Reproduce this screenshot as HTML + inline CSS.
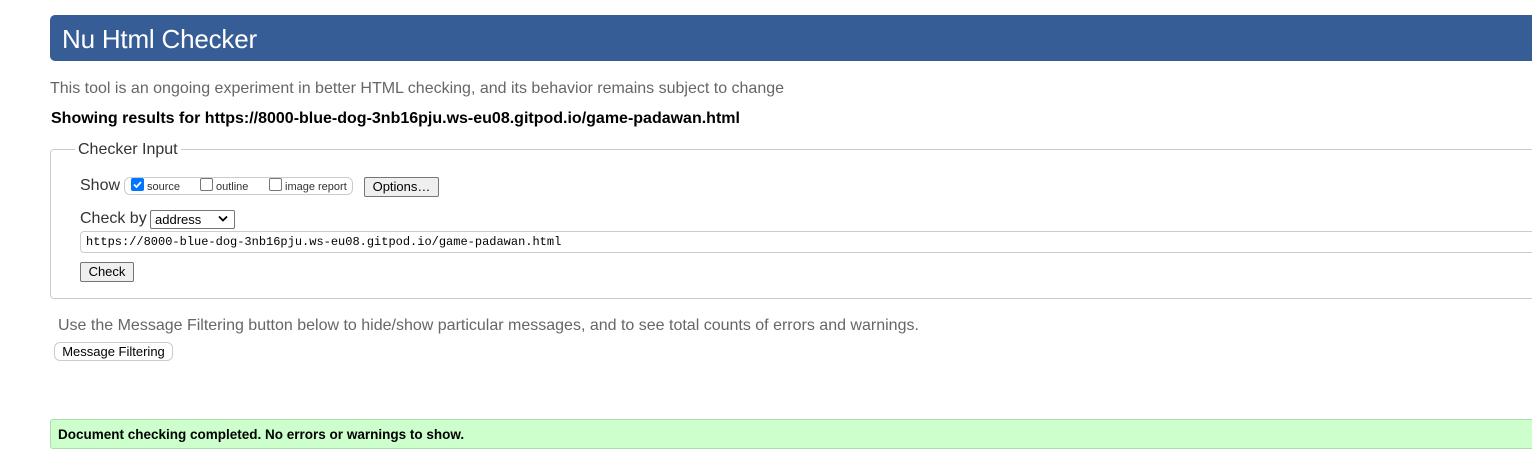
<!DOCTYPE html>
<html><head><style>
body{margin:0;width:1532px;height:461px;background:#fff;font-family:"Liberation Sans",Arial,sans-serif;position:relative;overflow:hidden}
.a{position:absolute;white-space:nowrap}
.btn{position:absolute;background:#efefef;border:1px solid #767676;border-radius:2px;font-size:13px;color:#000;box-sizing:border-box;text-align:center}
</style></head><body>
<div class="a" style="left:50px;top:15px;width:1500px;height:46px;background:#365d95;border-radius:5px"></div>
<div class="a" style="left:62px;top:23px;font-size:26px;color:#fff;line-height:32px;letter-spacing:-0.2px">Nu Html Checker</div>
<div class="a" style="left:50px;top:80px;font-size:16px;color:#666">This tool is an ongoing experiment in better HTML checking, and its behavior remains subject to change</div>
<div class="a" style="left:51px;top:110px;font-size:16px;font-weight:bold;color:#000">Showing results for https://8000-blue-dog-3nb16pju.ws-eu08.gitpod.io/game-padawan.html</div>
<div class="a" style="left:50px;top:149px;width:1500px;height:150px;border:1px solid #ccc;border-radius:4px;box-sizing:border-box"></div>
<div class="a" style="left:75px;top:141px;padding:0 3px;background:#fff;font-size:16px;color:#333">Checker Input</div>
<div class="a" style="left:80px;top:177px;font-size:16px;color:#333">Show</div>
<div class="a" style="left:124px;top:177px;width:229px;height:18px;border:1px solid #ccc;border-radius:6px;box-sizing:border-box"></div>
<div class="a" style="left:131px;top:178px;width:13px;height:13px;background:#0075ff;border-radius:2px"></div>
<svg class="a" style="left:131px;top:178px" width="13" height="13"><path d="M3 6.5l2.5 2.5 4.5-5" stroke="#fff" stroke-width="1.8" fill="none"/></svg>
<div class="a" style="left:147px;top:181px;font-size:11px;color:#333">source</div>
<div class="a" style="left:200px;top:178px;width:13px;height:13px;border:1px solid #767676;border-radius:2px;box-sizing:border-box"></div>
<div class="a" style="left:216px;top:181px;font-size:11px;color:#333">outline</div>
<div class="a" style="left:269px;top:178px;width:13px;height:13px;border:1px solid #767676;border-radius:2px;box-sizing:border-box"></div>
<div class="a" style="left:285px;top:181px;font-size:11px;color:#333">image report</div>
<div class="btn" style="left:364px;top:177px;width:75px;height:20px;line-height:18px">Options…</div>
<div class="a" style="left:80px;top:210px;font-size:16px;color:#333">Check by</div>
<div class="a" style="left:150px;top:210px;width:85px;height:19px;border:1px solid #767676;border-radius:2px;box-sizing:border-box;font-size:13px;line-height:17px;padding-left:4px">address</div>
<svg class="a" style="left:218px;top:215px" width="10" height="8"><path d="M1 1.5l4 4 4-4" stroke="#000" stroke-width="1.8" fill="none"/></svg>
<div class="a" style="left:80px;top:231px;width:1470px;height:22px;border:1px solid #ccc;border-radius:4px;box-sizing:border-box"></div>
<div class="a" style="left:86px;top:235px;font-family:'Liberation Mono',monospace;font-size:12px;color:#000">https://8000-blue-dog-3nb16pju.ws-eu08.gitpod.io/game-padawan.html</div>
<div class="btn" style="left:80px;top:262px;width:54px;height:20px;line-height:18px">Check</div>
<div class="a" style="left:58px;top:317px;font-size:16px;color:#666">Use the Message Filtering button below to hide/show particular messages, and to see total counts of errors and warnings.</div>
<div class="a" style="left:54px;top:342px;width:119px;height:19px;border:1px solid #ccc;border-radius:6px;box-sizing:border-box;font-size:13px;line-height:17px;text-align:center;background:#fff">Message Filtering</div>
<div class="a" style="left:50px;top:419px;width:1500px;height:30px;background:#ccffcc;border:1px solid #aaddaa;border-radius:3px;box-sizing:border-box"></div>
<div class="a" style="left:58px;top:427px;font-size:13.5px;font-weight:bold;color:#000">Document checking completed. No errors or warnings to show.</div>
</body></html>
